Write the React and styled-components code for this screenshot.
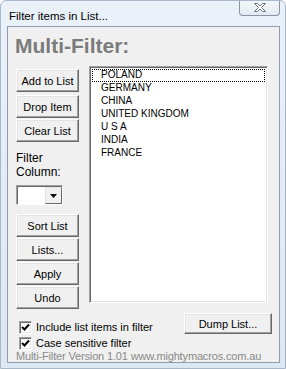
import styled, { createGlobalStyle } from "styled-components";

const GlobalStyle = createGlobalStyle`
  html, body {
    margin: 0;
    padding: 0;
    background: #ffffff;
  }
  body {
    font-family: "Liberation Sans", Arial, sans-serif;
  }
`;

const countries = [
  "POLAND",
  "GERMANY",
  "CHINA",
  "UNITED KINGDOM",
  "U S A",
  "INDIA",
  "FRANCE",
];

const App = () => {
  return (
    <>
      <GlobalStyle />
      <Window>
        <TitleBar>
          <Caption>Filter items in List...</Caption>
          <CloseButton>
            <svg width="16" height="11" viewBox="0 0 16 11">
              <path
                d="M2.5 1.5h3l2.5 2.5 2.5-2.5h3l-4 4 4 4h-3l-2.5-2.5-2.5 2.5h-3l4-4z"
                fill="#ffffff"
                stroke="#6b7480"
                strokeWidth="1"
                strokeLinejoin="round"
              />
            </svg>
          </CloseButton>
        </TitleBar>
        <Client>
          <Heading>Multi-Filter:</Heading>
          <Body>
            <LeftCol>
              <Button $mb={3}>Add to List</Button>
              <Button $mb={1}>Drop Item</Button>
              <Button>Clear List</Button>
              <Label>
                Filter
                <br />
                Column:
              </Label>
              <Combo>
                <ComboField />
                <ComboArrow>
                  <svg width="7" height="4" viewBox="0 0 7 4">
                    <path d="M0 0h7L3.5 4z" fill="#000" />
                  </svg>
                </ComboArrow>
              </Combo>
              <Button $mb={1}>Sort List</Button>
              <Button $mb={1}>Lists...</Button>
              <Button $mb={1}>Apply</Button>
              <Button>Undo</Button>
            </LeftCol>
            <ListBox>
              {countries.map((c, i) => (
                <Item key={c} $focused={i === 0}>
                  {c}
                </Item>
              ))}
            </ListBox>
          </Body>
          <Footer>
            <Checks>
              <CheckRow>
                <CheckBox>
                  <svg width="9" height="9" viewBox="0 0 9 9">
                    <path d="M1 4l2.5 2.5L8 1.5" fill="none" stroke="#000" strokeWidth="2" />
                  </svg>
                </CheckBox>
                Include list items in filter
              </CheckRow>
              <CheckRow>
                <CheckBox>
                  <svg width="9" height="9" viewBox="0 0 9 9">
                    <path d="M1 4l2.5 2.5L8 1.5" fill="none" stroke="#000" strokeWidth="2" />
                  </svg>
                </CheckBox>
                Case sensitive filter
              </CheckRow>
            </Checks>
            <DumpButton>Dump List...</DumpButton>
          </Footer>
          <Version>Multi-Filter Version 1.01 www.mightymacros.com.au</Version>
        </Client>
      </Window>
    </>
  );
};

const Window = styled.div`
  width: 286px;
  height: 369px;
  box-sizing: border-box;
  display: flex;
  flex-direction: column;
  background: linear-gradient(180deg, #eaf1f9 0%, #dce7f3 100%);
  border: 1px solid #a9b8c9;
  border-radius: 6px 6px 0 0;
  overflow: hidden;
`;

const TitleBar = styled.div`
  height: 25px;
  display: flex;
  align-items: flex-start;
  justify-content: space-between;
  flex-shrink: 0;
`;

const Caption = styled.div`
  font-family: "Liberation Sans", Arial, sans-serif;
  font-size: 11.5px;
  color: #000;
  padding: 9px 0 0 8px;
  line-height: 13px;
`;

const CloseButton = styled.div`
  width: 41px;
  height: 16px;
  margin: -1px 5px 0 0;
  box-sizing: border-box;
  border: 1px solid #8a94a2;
  border-top: none;
  border-radius: 0 0 4px 4px;
  background: linear-gradient(180deg, #f4f7fb 0%, #e3eaf3 100%);
  display: flex;
  align-items: center;
  justify-content: center;
`;

const Client = styled.div`
  flex: 1;
  margin: 0 5px 6px 6px;
  background: #f0f0f0;
  border: 1px solid #8d9cae;
  display: flex;
  flex-direction: column;
  padding: 0 9px 0 8px;
`;

const Heading = styled.div`
  font-family: "Liberation Sans", Arial, sans-serif;
  font-weight: bold;
  font-size: 21px;
  line-height: 24px;
  color: #7b7b7b;
  margin: 7px 0 0 -1px;
`;

const Body = styled.div`
  display: flex;
  align-items: flex-start;
  gap: 10px;
  margin-top: 8px;
`;

const LeftCol = styled.div`
  width: 63px;
  display: flex;
  flex-direction: column;
  padding-top: 3px;
`;

const Button = styled.div`
  height: 23px;
  box-sizing: border-box;
  margin-bottom: ${(p) => p.$mb || 0}px;
  background: #f0f0f0;
  border: 1px solid;
  border-color: #ffffff #696969 #696969 #ffffff;
  box-shadow: inset -1px -1px 0 #a0a0a0, inset 1px 1px 0 #e3e3e3;
  display: flex;
  align-items: center;
  justify-content: center;
  font-family: "Liberation Sans", Arial, sans-serif;
  font-size: 11px;
  color: #000;
  white-space: nowrap;
`;

const Label = styled.div`
  font-family: "Liberation Sans", Arial, sans-serif;
  font-size: 12px;
  line-height: 14px;
  color: #000;
  margin-top: 9px;
`;

const Combo = styled.div`
  display: flex;
  width: 47px;
  height: 20px;
  box-sizing: border-box;
  margin: 6px 0 9px 0;
  border: 1px solid;
  border-color: #a0a0a0 #ffffff #ffffff #a0a0a0;
  box-shadow: inset 1px 1px 0 #696969;
  background: #fff;
`;

const ComboField = styled.div`
  flex: 1;
`;

const ComboArrow = styled.div`
  width: 17px;
  box-sizing: border-box;
  margin: 1px 0 0 0;
  background: #f0f0f0;
  border: 1px solid;
  border-color: #e3e3e3 #696969 #696969 #e3e3e3;
  display: flex;
  align-items: center;
  justify-content: center;
`;

const ListBox = styled.div`
  width: 179px;
  height: 237px;
  box-sizing: border-box;
  background: #fff;
  border: 1px solid;
  border-color: #a0a0a0 #ffffff #ffffff #a0a0a0;
  box-shadow: inset 1px 1px 0 #696969, inset -1px -1px 0 #e3e3e3;
  padding: 2px 2px 0 2px;
`;

const Item = styled.div`
  height: 13px;
  box-sizing: border-box;
  line-height: 12px;
  padding-left: 9px;
  font-family: "Liberation Sans", Arial, sans-serif;
  font-size: 10px;
  color: #000;
  outline: ${(p) => (p.$focused ? "1px dotted #000" : "none")};
  outline-offset: -1px;
`;

const Footer = styled.div`
  display: flex;
  justify-content: space-between;
  align-items: flex-start;
  margin-top: 4px;
`;

const Checks = styled.div`
  display: flex;
  flex-direction: column;
  padding: 6px 0 0 3px;
`;

const CheckRow = styled.div`
  display: flex;
  align-items: center;
  gap: 4px;
  height: 16px;
  font-family: "Liberation Sans", Arial, sans-serif;
  font-size: 11px;
  color: #000;
`;

const CheckBox = styled.span`
  width: 13px;
  height: 13px;
  box-sizing: border-box;
  background: #fff;
  border: 1px solid;
  border-color: #a0a0a0 #ffffff #ffffff #a0a0a0;
  box-shadow: inset 1px 1px 0 #696969, inset -1px -1px 0 #e3e3e3;
  display: flex;
  align-items: center;
  justify-content: center;
`;

const DumpButton = styled(Button)`
  width: 88px;
  height: 21px;
  margin-right: -2px;
`;

const Version = styled.div`
  font-family: "Liberation Sans", Arial, sans-serif;
  font-size: 11px;
  letter-spacing: -0.15px;
  line-height: 11px;
  color: #8a8a8a;
  white-space: nowrap;
`;

export default App;
